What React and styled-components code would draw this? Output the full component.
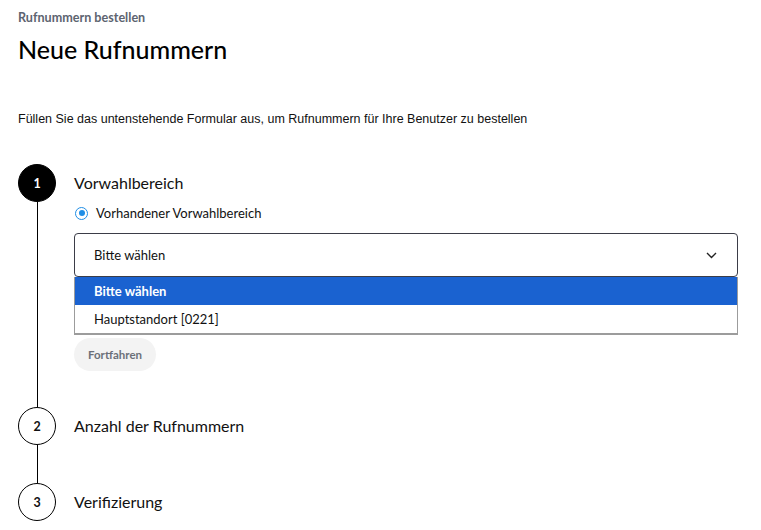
import React from "react";
import styled, { createGlobalStyle } from "styled-components";

const Global = createGlobalStyle`
  html, body { margin: 0; padding: 0; background: #fff; }
  body { font-family: "Lato", "Open Sans", sans-serif; color: #111; }
  * { box-sizing: border-box; }
`;

const Page = styled.div`
  padding: 11px 18px 0 18px;
  width: 761px;
`;

const Breadcrumb = styled.div`
  font-size: 12.6px;
  font-weight: 700;
  color: #5d6470;
  line-height: 14px;
`;

const Title = styled.h1`
  margin: 10px 0 0 0;
  font-size: 25px;
  font-weight: 500;
  color: #000;
  line-height: 28px;
`;

const Intro = styled.p`
  margin: 48px 0 0 0;
  font-family: "Liberation Sans", Arial, sans-serif;
  font-size: 12.5px;
  color: #111;
  line-height: 16px;
`;

const Steps = styled.div`
  margin-top: 37px;
  display: flex;
  flex-direction: column;
`;

const Step = styled.div`
  display: grid;
  grid-template-columns: 38px 1fr;
  column-gap: 18px;
  min-height: ${(p) => p.$h}px;
`;

const Rail = styled.div`
  display: flex;
  flex-direction: column;
  align-items: center;
`;

const Circle = styled.div`
  width: 38px;
  height: 38px;
  border-radius: 50%;
  flex: none;
  display: flex;
  align-items: center;
  justify-content: center;
  font-size: 12.5px;
  font-weight: 700;
  background: ${(p) => (p.$active ? "#000" : "#fff")};
  color: ${(p) => (p.$active ? "#fff" : "#111")};
  border: 1px solid #000;
`;

const Line = styled.div`
  width: 1px;
  flex: 1;
  background: #000;
`;

const Content = styled.div`
  display: flex;
  flex-direction: column;
  align-items: flex-start;
`;

const StepTitle = styled.div`
  font-size: 16px;
  line-height: 38px;
  height: 38px;
  color: #111;
`;

const RadioRow = styled.label`
  display: flex;
  align-items: center;
  gap: 8px;
  font-size: 13px;
  color: #111;
  margin-top: 1px;
  height: 20px;
`;

const Radio = styled.span`
  width: 13px;
  height: 13px;
  border-radius: 50%;
  border: 1.5px solid #1f8ee6;
  display: flex;
  align-items: center;
  justify-content: center;
  margin-left: 1px;
  &::after {
    content: "";
    width: 6px;
    height: 6px;
    border-radius: 50%;
    background: #1f8ee6;
  }
`;

const SelectWrap = styled.div`
  position: relative;
  width: 664px;
  margin-top: 10px;
`;

const Select = styled.div`
  height: 44px;
  border: 1px solid #3b3d48;
  border-radius: 4px;
  display: flex;
  align-items: center;
  justify-content: space-between;
  padding: 0 20px 0 19px;
  font-size: 13px;
  color: #111;
`;

const Menu = styled.ul`
  position: absolute;
  left: 0;
  right: 0;
  top: 44px;
  margin: 0;
  padding: 0;
  list-style: none;
  border: 1px solid #9c9c9c;
  border-top: none;
  border-bottom-width: 2px;
  background: #fff;
`;

const Option = styled.li`
  height: 28px;
  display: flex;
  align-items: center;
  padding-left: 19px;
  font-size: 13px;
  background: ${(p) => (p.$selected ? "#1a62d0" : "#fff")};
  color: ${(p) => (p.$selected ? "#fff" : "#111")};
  font-weight: ${(p) => (p.$selected ? 700 : 400)};
`;

const Button = styled.button`
  margin-top: 61px;
  height: 33px;
  padding: 0 14px;
  border: none;
  border-radius: 17px;
  background: #f3f3f3;
  color: #6b7079;
  font-family: "Lato", sans-serif;
  font-size: 11.5px;
  font-weight: 700;
`;

const Chevron = () => (
  <svg width="11" height="7" viewBox="0 0 11 7" fill="none">
    <path d="M1 1l4.5 4.5L10 1" stroke="#222" strokeWidth="1.4" />
  </svg>
);

export default function App() {
  return (
    <Page>
      <Global />
      <Breadcrumb>Rufnummern bestellen</Breadcrumb>
      <Title>Neue Rufnummern</Title>
      <Intro>Füllen Sie das untenstehende Formular aus, um Rufnummern für Ihre Benutzer zu bestellen</Intro>
      <Steps>
        <Step $h={243}>
          <Rail>
            <Circle $active>1</Circle>
            <Line />
          </Rail>
          <Content>
            <StepTitle>Vorwahlbereich</StepTitle>
            <RadioRow>
              <Radio />
              Vorhandener Vorwahlbereich
            </RadioRow>
            <SelectWrap>
              <Select>
                Bitte wählen
                <Chevron />
              </Select>
              <Menu>
                <Option $selected>Bitte wählen</Option>
                <Option>Hauptstandort [0221]</Option>
              </Menu>
            </SelectWrap>
            <Button>Fortfahren</Button>
          </Content>
        </Step>
        <Step $h={76}>
          <Rail>
            <Circle>2</Circle>
            <Line />
          </Rail>
          <Content>
            <StepTitle>Anzahl der Rufnummern</StepTitle>
          </Content>
        </Step>
        <Step $h={40}>
          <Rail>
            <Circle>3</Circle>
          </Rail>
          <Content>
            <StepTitle>Verifizierung</StepTitle>
          </Content>
        </Step>
      </Steps>
    </Page>
  );
}
